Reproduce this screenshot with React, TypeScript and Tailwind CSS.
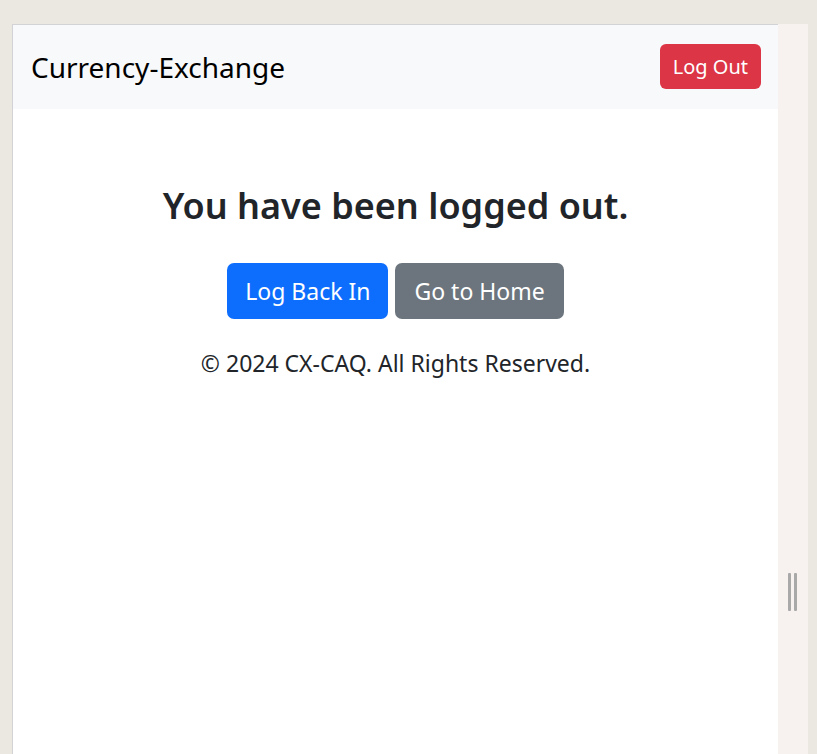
import React from "react";

export default function App() {
  const font = { fontFamily: '"Noto Sans", "Open Sans", sans-serif' };
  return (
    <div className="flex h-[754px] w-[817px] overflow-hidden bg-[#ebe7e1] pl-[12px] pt-[24px]" style={font}>
      <div className="flex h-full w-[766px] flex-col border-l border-t border-[#d3d3d6] bg-white">
        <nav className="flex h-[84px] items-center justify-between bg-[#f8f9fa] pl-[18px] pr-[17px]">
          <span className="text-[28px] text-[#000000]">Currency-Exchange</span>
          <button className="mb-[1px] h-[45px] rounded-[6px] bg-[#dc3545] px-[13px] text-[20px] text-white">Log Out</button>
        </nav>
        <main className="flex flex-col items-center pt-[75px]">
          <h2 className="text-[36px] font-semibold leading-[1.2] text-[#212529]">You have been logged out.</h2>
          <div className="mt-[36px] flex gap-[7px]">
            <button className="h-[56px] rounded-[7px] bg-[#0d6efd] px-[18px] text-[23px] text-white">Log Back In</button>
            <button className="h-[56px] rounded-[7px] bg-[#6c757d] px-[19px] text-[23px] text-white">Go to Home</button>
          </div>
          <p className="mt-[27px] text-[23px] leading-[1.5] text-[#212529]">© 2024 CX-CAQ. All Rights Reserved.</p>
        </main>
      </div>
      <div className="flex h-full w-[30px] flex-col bg-[#f7f1f0]">
        <div className="ml-[10px] mt-[549px] flex gap-[3px]">
          <div className="h-[38px] w-[3px] rounded-[1px] bg-[#a9a9a9]" />
          <div className="h-[38px] w-[3px] rounded-[1px] bg-[#a9a9a9]" />
        </div>
      </div>
    </div>
  );
}
